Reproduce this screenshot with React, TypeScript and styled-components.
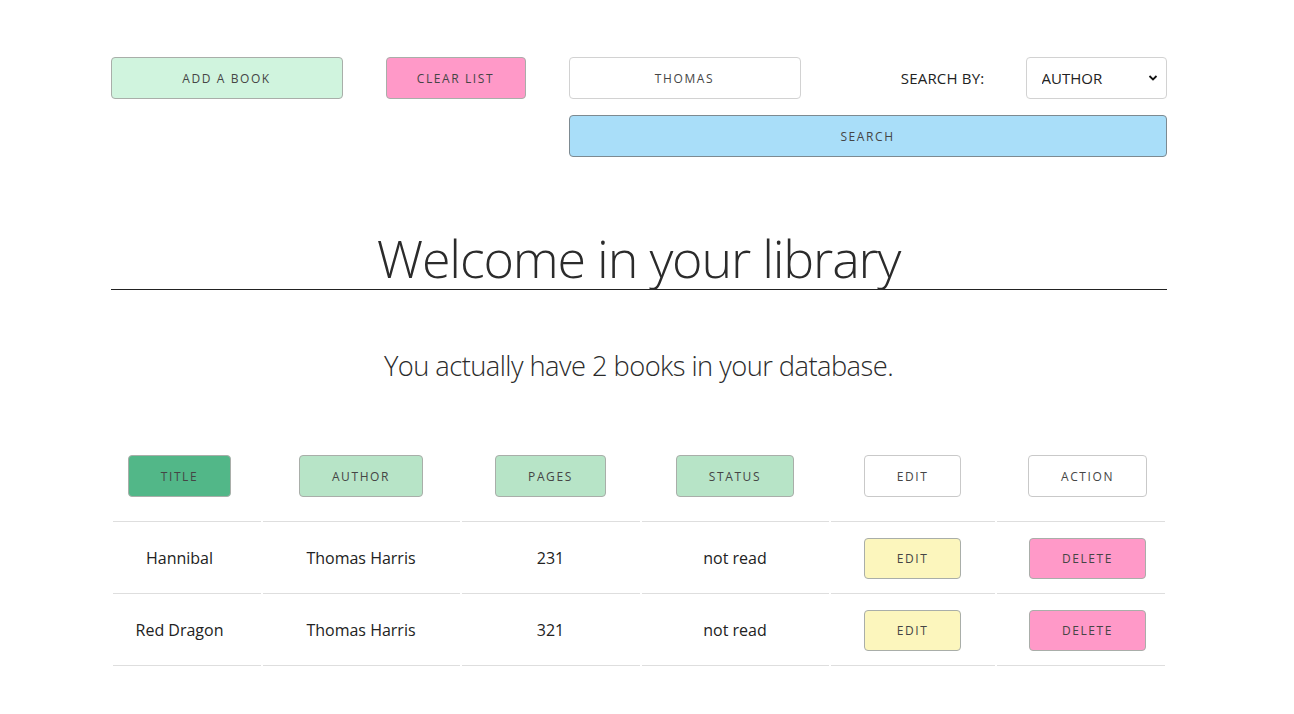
import React from 'react';
import styled, { createGlobalStyle, css } from 'styled-components';

const GlobalStyle = createGlobalStyle`
  html, body {
    margin: 0;
    padding: 0;
    background: #ffffff;
  }

  body {
    font-family: 'Open Sans', 'Noto Sans', sans-serif;
    color: #212529;
  }
`;

const Page = styled.div`
  padding: 57px 17px 40px 0;
`;

const Container = styled.main`
  width: 1056px;
  margin: 0 auto;
`;

const Toolbar = styled.form`
  display: grid;
  grid-template-columns: 232px 140px 232px 1fr 141px;
  grid-template-rows: 42px 42px;
  column-gap: 43px;
  row-gap: 16px;
  align-items: center;
`;

type Tone = 'mint' | 'pink' | 'sky' | 'lemon' | 'green' | 'leaf' | 'plain';

const tones: Record<Tone, string> = {
  mint: '#d0f4de',
  pink: '#ff99c8',
  sky: '#a9def9',
  lemon: '#fcf6bd',
  green: '#52b788',
  leaf: '#b7e4c7',
  plain: '#ffffff',
};

const buttonBase = css`
  font-family: 'Open Sans', 'Noto Sans', sans-serif;
  font-size: 12px;
  font-weight: 400;
  letter-spacing: 1.6px;
  text-transform: uppercase;
  white-space: nowrap;
  color: #454545;
  border-radius: 4px;
  cursor: pointer;
`;

const Button = styled.button<{ $tone: Tone; $wide?: boolean }>`
  ${buttonBase}
  height: 42px;
  padding: ${p => (p.$wide ? '0' : '0 32px')};
  background-color: ${p => tones[p.$tone]};
  border: 1px solid ${p => (p.$tone === 'plain' ? '#c9c9c9' : '#a9aea9')};
  ${p => p.$wide && 'width: 100%;'}
`;

const SearchButton = styled(Button)`
  grid-column: 3 / 6;
  grid-row: 2;
  border-color: #7d8a91;
`;

const SearchInput = styled.input`
  ${buttonBase}
  height: 42px;
  box-sizing: border-box;
  width: 100%;
  text-align: center;
  background: #ffffff;
  border: 1px solid #d2d2d2;
  outline: none;
`;

const Label = styled.label`
  font-family: 'Open Sans', 'Noto Sans', sans-serif;
  font-size: 15px;
  color: #222222;
  text-align: right;
  letter-spacing: 0.2px;
  margin-right: -2px;
`;

const SelectWrap = styled.div`
  position: relative;
  height: 42px;
`;

const Select = styled.select`
  appearance: none;
  width: 100%;
  height: 42px;
  box-sizing: border-box;
  padding: 0 28px 0 15px;
  font-family: 'Open Sans', 'Noto Sans', sans-serif;
  font-size: 15px;
  color: #222222;
  background: #ffffff;
  border: 1px solid #d2d2d2;
  border-radius: 4px;
  outline: none;
`;

const Chevron = styled.svg`
  position: absolute;
  right: 9px;
  top: 17px;
  width: 10px;
  height: 8px;
  pointer-events: none;
`;

const Heading = styled.h1`
  margin: 72px 0 0;
  font-family: 'Open Sans', 'Noto Sans', sans-serif;
  font-weight: 300;
  font-size: 52px;
  line-height: 58px;
  color: #2b2b2b;
  text-align: center;
  letter-spacing: -1.2px;
  border-bottom: 1px solid #222222;
  padding-bottom: 2px;
`;

const Subtitle = styled.p`
  margin: 58px 0 0;
  font-family: 'Open Sans', 'Noto Sans', sans-serif;
  font-weight: 300;
  font-size: 27.3px;
  line-height: 36px;
  color: #2b2b2b;
  text-align: center;
  letter-spacing: -0.55px;
`;

const Table = styled.table`
  width: 1056px;
  margin-top: 59px;
  border-collapse: separate;
  border-spacing: 2px 0;
  table-layout: fixed;
`;

const edgeCell = css`
  &:first-child {
    padding-right: 14px;
  }
  &:last-child {
    padding-left: 14px;
  }
`;

const HeadCell = styled.th<{ $w: number }>`
  width: ${p => p.$w}px;
  box-sizing: border-box;
  padding: 12px 0 24px;
  border-bottom: 1px solid #dedede;
  font-weight: 400;
  ${edgeCell}
`;

const Cell = styled.td`
  height: 71px;
  padding: 0;
  text-align: center;
  vertical-align: middle;
  border-bottom: 1px solid #dedede;
  font-family: 'Open Sans', 'Noto Sans', sans-serif;
  font-size: 16px;
  color: #222222;
  ${edgeCell}
`;

const RowButton = styled(Button)`
  height: 41px;
  margin-top: 1px;
`;

const columns: { label: string; tone: Tone; w: number }[] = [
  { label: 'Title', tone: 'green', w: 148 },
  { label: 'Author', tone: 'leaf', w: 197 },
  { label: 'Pages', tone: 'leaf', w: 178 },
  { label: 'Status', tone: 'leaf', w: 187 },
  { label: 'Edit', tone: 'plain', w: 164 },
  { label: 'Action', tone: 'plain', w: 168 },
];

const books = [
  { title: 'Hannibal', author: 'Thomas Harris', pages: 231, status: 'not read' },
  { title: 'Red Dragon', author: 'Thomas Harris', pages: 321, status: 'not read' },
];

const App: React.FC = () => {
  return (
    <Page>
      <GlobalStyle />
      <Container>
        <Toolbar onSubmit={e => e.preventDefault()}>
          <Button type="button" $tone="mint" $wide>Add a book</Button>
          <Button type="button" $tone="pink" $wide>Clear list</Button>
          <SearchInput defaultValue="THOMAS" />
          <Label htmlFor="search-by">SEARCH BY:</Label>
          <SelectWrap>
            <Select id="search-by" defaultValue="author">
              <option value="author">AUTHOR</option>
              <option value="title">TITLE</option>
            </Select>
            <Chevron viewBox="0 0 10 8">
              <path d="M1.5 2 L5 5.5 L8.5 2" fill="none" stroke="#111" strokeWidth="1.8" />
            </Chevron>
          </SelectWrap>
          <SearchButton type="submit" $tone="sky" $wide>Search</SearchButton>
        </Toolbar>

        <Heading>Welcome in your library</Heading>
        <Subtitle>You actually have {books.length} books in your database.</Subtitle>

        <Table>
          <thead>
            <tr>
              {columns.map(c => (
                <HeadCell key={c.label} $w={c.w}>
                  <Button type="button" $tone={c.tone}>{c.label}</Button>
                </HeadCell>
              ))}
            </tr>
          </thead>
          <tbody>
            {books.map(b => (
              <tr key={b.title}>
                <Cell>{b.title}</Cell>
                <Cell>{b.author}</Cell>
                <Cell>{b.pages}</Cell>
                <Cell>{b.status}</Cell>
                <Cell>
                  <RowButton type="button" $tone="lemon">Edit</RowButton>
                </Cell>
                <Cell>
                  <RowButton type="button" $tone="pink">Delete</RowButton>
                </Cell>
              </tr>
            ))}
          </tbody>
        </Table>
      </Container>
    </Page>
  );
};

export default App;
